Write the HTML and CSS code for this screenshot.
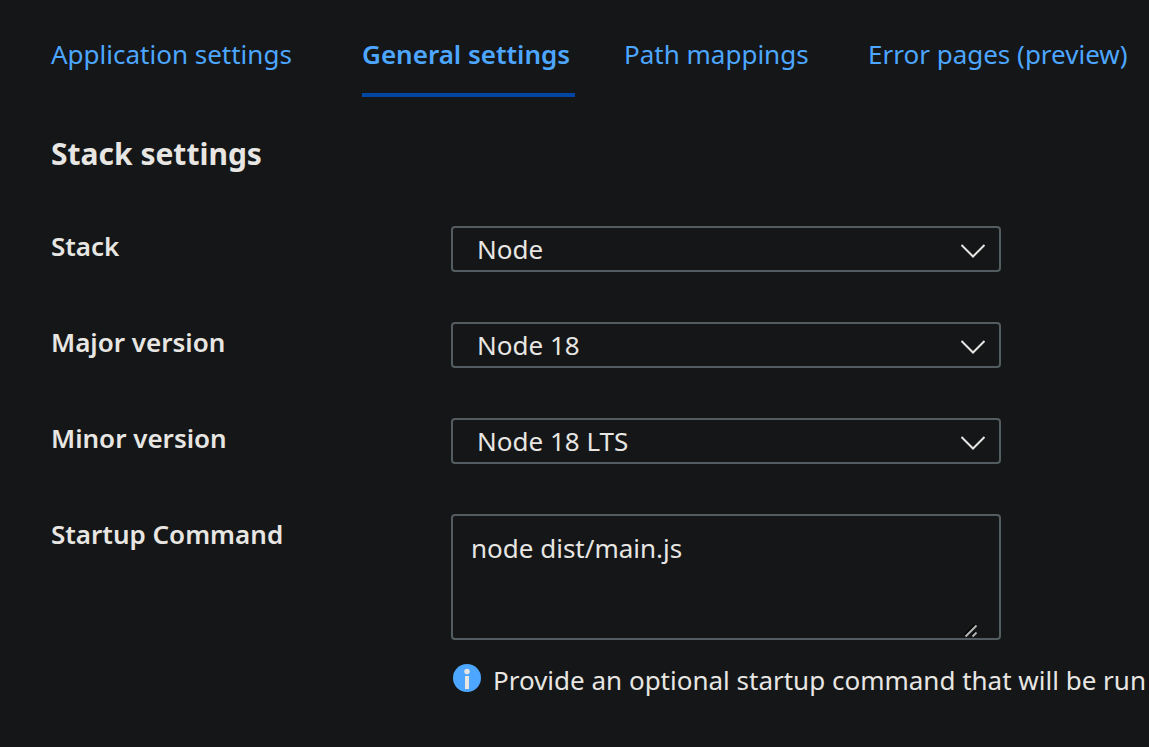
FILE: index.html
```
<!DOCTYPE html>
<html lang="en">
<head>
<meta charset="utf-8">
<meta name="viewport" content="width=device-width, initial-scale=1">
<title>General settings</title>
<link rel="stylesheet" href="styles.css">
</head>
<body>
<main class="page">
  <nav class="tabs" aria-label="Configuration">
    <a class="tab" href="#application">Application settings</a>
    <a class="tab tab-active" href="#general" aria-current="page">General settings</a>
    <a class="tab" href="#paths">Path mappings</a>
    <a class="tab" href="#errors">Error pages (preview)</a>
  </nav>
  <h1 class="title">Stack settings</h1>
  <form class="form">
    <div class="row">
      <label class="label" for="stack">Stack</label>
      <div class="control">
        <select class="select" id="stack"><option>Node</option></select>
        <svg class="chevron" viewBox="0 0 26 16" aria-hidden="true"><path d="M1.5 2 13 13.500 24.500 2"/></svg>
      </div>
    </div>
    <div class="row">
      <label class="label" for="major">Major version</label>
      <div class="control">
        <select class="select" id="major"><option>Node 18</option></select>
        <svg class="chevron" viewBox="0 0 26 16" aria-hidden="true"><path d="M1.5 2 13 13.500 24.500 2"/></svg>
      </div>
    </div>
    <div class="row">
      <label class="label" for="minor">Minor version</label>
      <div class="control">
        <select class="select" id="minor"><option>Node 18 LTS</option></select>
        <svg class="chevron" viewBox="0 0 26 16" aria-hidden="true"><path d="M1.5 2 13 13.500 24.500 2"/></svg>
      </div>
    </div>
    <div class="row">
      <label class="label" for="command">Startup Command</label>
      <div class="control">
        <textarea class="textarea" id="command" aria-describedby="command-hint" spellcheck="false">node dist/main.js</textarea>
        <svg class="grip" viewBox="0 0 14 14" aria-hidden="true"><path class="grip-shadow" d="M.5 11.500 11.500.5M7.500 11.500 11.500 7.500"/><path d="M1.500 12.500 12.500 1.500M8.500 12.500 12.500 8.500"/></svg>
      </div>
      <p class="hint" id="command-hint">
        <svg class="info" viewBox="0 0 28 28" aria-hidden="true"><circle class="info-disc" cx="14" cy="14" r="14"/><circle cx="14" cy="7.500" r="2.700"/><path d="M12 12h4v13h-4z"/></svg>
        <span>Provide an optional startup command that will be run</span>
      </p>
    </div>
  </form>
</main>
</body>
</html>
```
FILE: styles.css
```
* {
  box-sizing: border-box;
}

body {
  margin: 0;
  background: #141617;
  color: #e8e6e3;
  font: 26px/36px "Segoe UI", "Noto Sans", "Open Sans", sans-serif;
}

.page {
  padding: 36px 0 48px 51px;
}

.tabs {
  display: grid;
  grid-template-columns: 311px 262px 244px auto;
}

.tab {
  justify-self: start;
  padding: 0 5px 21px 0;
  border-bottom: 4px solid transparent;
  color: #4da6ff;
  text-decoration: none;
  white-space: nowrap;
}

.tab-active {
  border-color: #0047a3;
  font-weight: 600;
}

.title {
  margin: 36px 0 52px;
  font-size: 30px;
  line-height: 41px;
  font-weight: 700;
}

.form {
  display: grid;
  gap: 50px;
}

.row {
  display: grid;
  grid-template-columns: 400px minmax(0, 1fr);
}

.label {
  padding-top: 2px;
  font-weight: 600;
}

.control {
  position: relative;
  width: 100%;
  max-width: 550px;
}

.select,
.textarea {
  display: block;
  width: 100%;
  border: 2px solid #535c60;
  border-radius: 4px;
  background: transparent;
  color: inherit;
  font: inherit;
}

.select {
  appearance: none;
  height: 46px;
  padding: 0 48px 0 24px;
}

.textarea {
  height: 126px;
  padding: 14px 18px;
  resize: none;
}

.chevron,
.grip {
  position: absolute;
  fill: none;
  stroke: #e8e6e3;
  pointer-events: none;
}

.chevron {
  top: 17px;
  right: 15px;
  width: 26px;
  height: 16px;
  stroke-width: 2;
}

.grip {
  right: 23px;
  bottom: 2px;
  width: 14px;
  height: 14px;
  stroke: #b4b4b4;
  stroke-width: 2;
}

.grip-shadow {
  stroke: #000;
}

.hint {
  grid-column: 2;
  display: flex;
  gap: 12px;
  margin: 22px 0 0 2px;
  white-space: nowrap;
}

.info {
  flex: none;
  width: 28px;
  height: 28px;
  margin-top: 2px;
  fill: #e8e6e3;
}

.info-disc {
  fill: #4da6ff;
}
```
